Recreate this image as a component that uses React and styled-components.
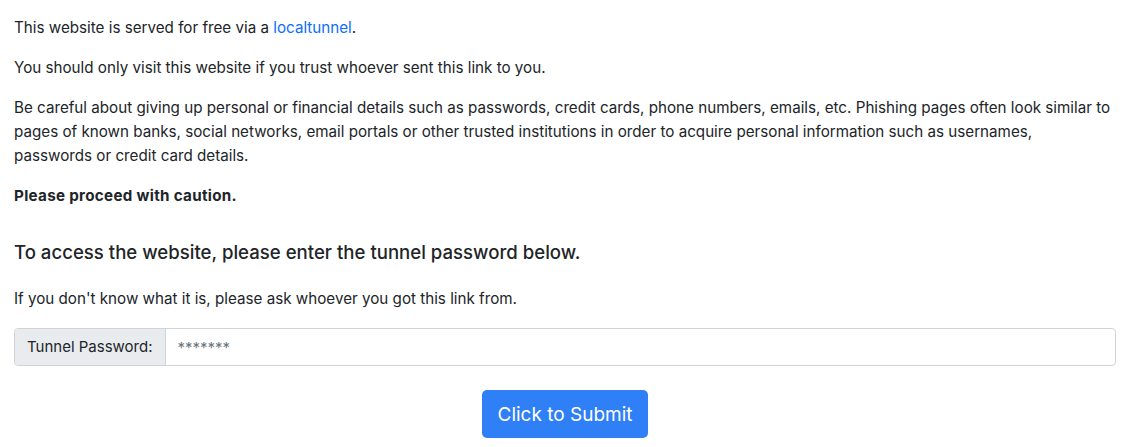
import styled, { createGlobalStyle } from "styled-components";

const GlobalStyle = createGlobalStyle`
  body {
    margin: 0;
    background: #fff;
    color: #212529;
    font-family: Inter, "Liberation Sans", Arial, sans-serif;
    font-size: 15.2px;
    line-height: 24px;
  }
`;

const Page = styled.div`
  padding: 16px 22px 0 14px;
`;

const Para = styled.p`
  margin: 0 4px 16px 0;
  font-weight: ${(p) => (p.$bold ? 700 : 400)};
  letter-spacing: ${(p) => (p.$bold ? "0.3px" : "normal")};
`;

const Link = styled.a`
  color: #0d6efd;
  text-decoration: none;
`;

const Heading = styled.h5`
  margin: 32px 0 23px;
  font-size: 18.6px;
  font-weight: 500;
  line-height: 24px;
`;

const InputGroup = styled.div`
  display: flex;
  margin-top: 17px;
  height: 38px;
  border: 1px solid #ced4da;
  border-radius: 4px;
  box-sizing: border-box;
`;

const Addon = styled.span`
  display: flex;
  align-items: center;
  padding: 0 12px;
  background: #e9ecef;
  border-right: 1px solid #ced4da;
  border-radius: 4px 0 0 4px;
  color: #212529;
  font-size: 15px;
`;

const Input = styled.input`
  flex: 1;
  border: 0;
  outline: none;
  padding: 0 12px;
  font-family: inherit;
  font-size: 15px;
  color: #6c757d;
  background: transparent;
  border-radius: 0 4px 4px 0;
`;

const Actions = styled.div`
  display: flex;
  justify-content: center;
  padding-top: 24px;
`;

const Button = styled.button`
  width: 166px;
  height: 48px;
  border: 0;
  border-radius: 5px;
  background: #2f80f6;
  color: #fff;
  font-family: inherit;
  font-size: 19px;
`;

export default function App() {
  return (
    <>
      <GlobalStyle />
      <Page>
        <Para>
          This website is served for free via a <Link href="#">localtunnel</Link>.
        </Para>
        <Para>You should only visit this website if you trust whoever sent this link to you.</Para>
        <Para>
          Be careful about giving up personal or financial details such as passwords, credit cards, phone numbers,
          emails, etc. Phishing pages often look similar to pages of known banks, social networks, email portals or
          other trusted institutions in order to acquire personal information such as usernames, passwords or credit
          card details.
        </Para>
        <Para $bold>Please proceed with caution.</Para>
        <Heading>To access the website, please enter the tunnel password below.</Heading>
        <Para>If you don't know what it is, please ask whoever you got this link from.</Para>
        <InputGroup>
          <Addon>Tunnel Password:</Addon>
          <Input type="text" defaultValue="*******" />
        </InputGroup>
        <Actions>
          <Button>Click to Submit</Button>
        </Actions>
      </Page>
    </>
  );
}
